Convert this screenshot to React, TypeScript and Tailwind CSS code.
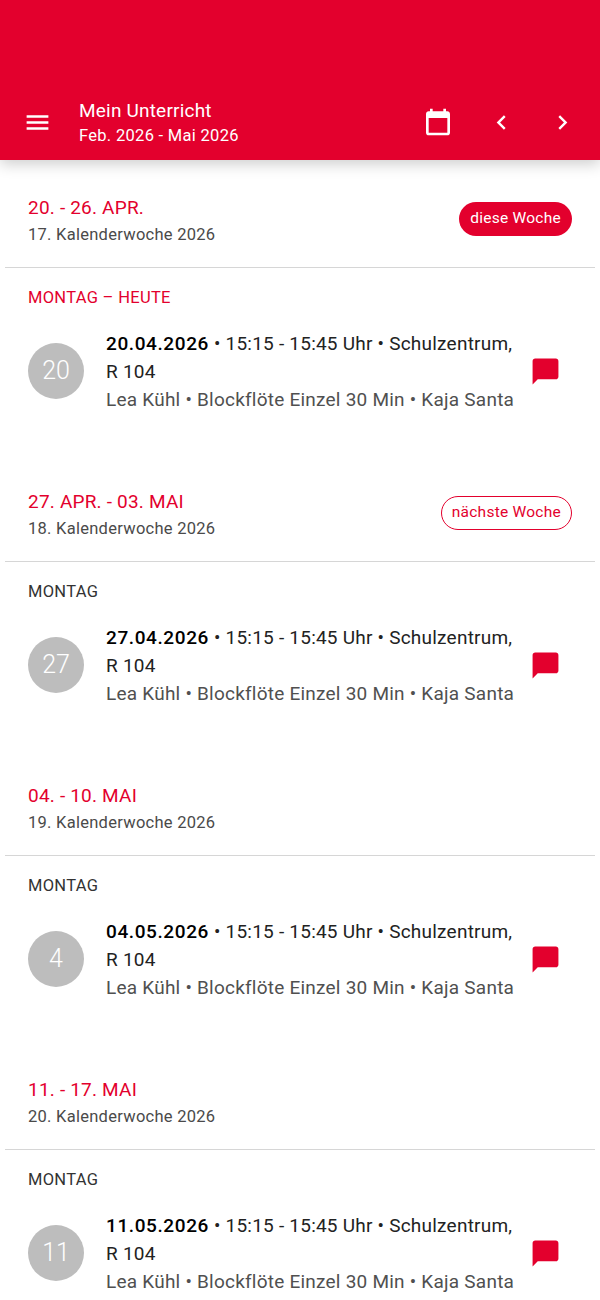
const weeks = [
  { range: "20. - 26. APR.", kw: "17. Kalenderwoche 2026", day: "MONTAG – HEUTE", today: true, badge: "diese Woche", num: "20", date: "20.04.2026" },
  { range: "27. APR. - 03. MAI", kw: "18. Kalenderwoche 2026", day: "MONTAG", badgeOutline: "nächste Woche", num: "27", date: "27.04.2026" },
  { range: "04. - 10. MAI", kw: "19. Kalenderwoche 2026", day: "MONTAG", num: "4", date: "04.05.2026" },
  { range: "11. - 17. MAI", kw: "20. Kalenderwoche 2026", day: "MONTAG", num: "11", date: "11.05.2026" },
];

function Week({ w }: { w: (typeof weeks)[number] }) {
  return (
    <section className="h-[294px] shrink-0">
      <div className="h-[108px] border-b border-[#d6d6d6] mx-[5px] px-[23px] pt-[33px] flex justify-between">
        <div>
          <div className="text-[19px] leading-[30px] tracking-[0.2px] text-[#e3002d]">{w.range}</div>
          <div className="text-[16.5px] leading-[24px] tracking-[0.27px] text-[#4a4a4a]">{w.kw}</div>
        </div>
        {w.badge && (
          <span className="mt-[9px] h-[34px] px-[11px] flex items-center rounded-full bg-[#e3002d] text-white text-[15.5px] tracking-[0.25px]">
            {w.badge}
          </span>
        )}
        {w.badgeOutline && (
          <span className="mt-[9px] h-[34px] px-[10px] flex items-center rounded-full border border-[#e3002d] text-[#e3002d] text-[15.5px] tracking-[0.25px]">
            {w.badgeOutline}
          </span>
        )}
      </div>
      <div className={`px-[28px] pt-[18px] text-[16.5px] leading-[24px] tracking-[0.3px] ${w.today ? "text-[#e3002d]" : "text-[#333333]"}`}>
        {w.day}
      </div>
      <div className="flex items-center pl-[28px] pr-[39px] mt-[20px]">
        <div className="w-[56px] h-[56px] mb-[2px] shrink-0 rounded-full bg-[#bdbdbd] text-white text-[25px] font-light flex items-center justify-center">
          {w.num}
        </div>
        <div className="ml-[22px] w-[412px] text-[19px] leading-[28px] tracking-[0.23px]">
          <div className="text-[#222222]">
            <span className="font-medium text-black tracking-[0.6px]">{w.date}</span> • 15:15 - 15:45 Uhr • Schulzentrum, R 104
          </div>
          <div className="text-[#505050] whitespace-nowrap">Lea Kühl • Blockflöte Einzel 30 Min • Kaja Santa</div>
        </div>
        <svg viewBox="0 0 24 24" className="w-[31px] h-[31px] mb-[2px] ml-auto shrink-0" fill="#e3002d">
          <path d="M20 2H4c-1.1 0-2 .9-2 2v18l4-4h14c1.1 0 2-.9 2-2V4c0-1.1-.9-2-2-2z" />
        </svg>
      </div>
    </section>
  );
}

export default function App() {
  return (
    <div className="w-[600px] h-[1300px] overflow-hidden bg-white flex flex-col font-['Roboto',sans-serif]">
      <header className="relative z-10 h-[160px] shrink-0 bg-[#e3002d] text-white shadow-[0_4px_14px_rgba(0,0,0,0.2)] flex items-end pb-[13px]">
        <svg viewBox="0 0 24 24" className="w-[29px] h-[29px] ml-[23px] mb-[10px]" fill="white">
          <path d="M3 18h18v-2H3v2zm0-5h18v-2H3v2zm0-7v2h18V6H3z" />
        </svg>
        <div className="ml-[27px]">
          <div className="text-[19px] leading-[27px] tracking-[0.2px]">Mein Unterricht</div>
          <div className="text-[16.5px] leading-[23px] tracking-[0.3px]">Feb. 2026 - Mai 2026</div>
        </div>
        <svg viewBox="0 0 24 24" className="w-[32px] h-[32px] ml-auto mb-[9px]" fill="white">
          <path d="M19 4h-1V2h-2v2H8V2H6v2H5c-1.1 0-2 .9-2 2v14c0 1.1.9 2 2 2h14c1.1 0 2-.9 2-2V6c0-1.1-.9-2-2-2zm0 16H5V9h14v11z" />
        </svg>
        <svg viewBox="0 0 24 24" className="w-[29px] h-[29px] ml-[33px] mb-[10px]" fill="white">
          <path d="M15.41 7.41 14 6l-6 6 6 6 1.41-1.41L10.83 12z" />
        </svg>
        <svg viewBox="0 0 24 24" className="w-[29px] h-[29px] ml-[32px] mr-[23px] mb-[10px]" fill="white">
          <path d="M10 6 8.59 7.41 13.17 12l-4.58 4.59L10 18l6-6z" />
        </svg>
      </header>
      {weeks.map((w) => (
        <Week key={w.date} w={w} />
      ))}
    </div>
  );
}
